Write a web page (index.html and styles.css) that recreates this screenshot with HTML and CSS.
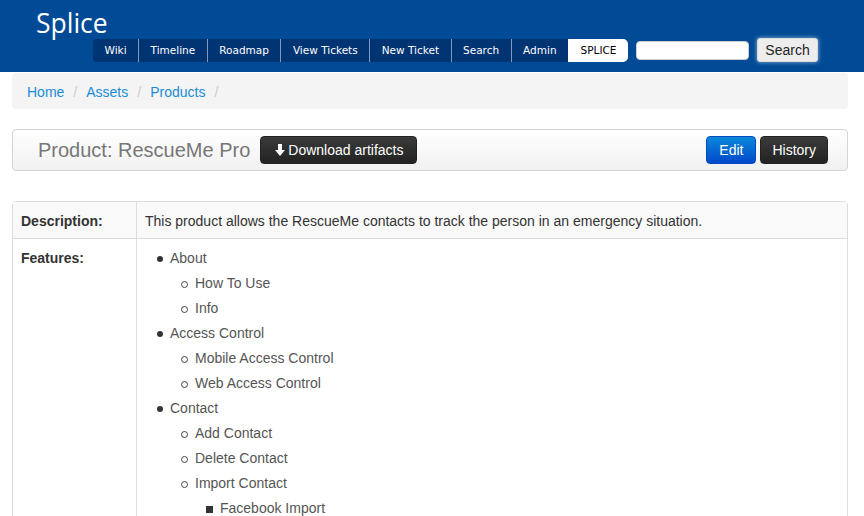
FILE: index.html
```html
<!DOCTYPE html>
<html>
<head>
<meta charset="utf-8">
<link rel="stylesheet" href="styles.css">
</head>
<body>
<header class="top">
  <div class="logo">Splice</div>
  <div class="navrow">
    <ul class="tabs">
      <li>Wiki</li>
      <li>Timeline</li>
      <li>Roadmap</li>
      <li>View Tickets</li>
      <li>New Ticket</li>
      <li>Search</li>
      <li>Admin</li>
      <li class="active">SPLICE</li>
    </ul>
    <input class="search-input" type="text">
    <button class="search-btn">Search</button>
  </div>
</header>
<main class="container">
  <nav class="crumbs">
    <a href="#">Home</a><span class="sep">/</span><a href="#">Assets</a><span class="sep">/</span><a href="#">Products</a><span class="sep">/</span>
  </nav>
  <div class="panel">
    <h1 class="title">Product: RescueMe Pro</h1>
    <button class="btn btn-dark btn-dl"><svg class="arrow" width="10" height="12" viewBox="0 0 10 12"><path d="M3 0h4v6h3l-5 6-5-6h3z" fill="#fff"/></svg>Download artifacts</button>
    <div class="spacer"></div>
    <button class="btn btn-primary">Edit</button>
    <button class="btn btn-dark">History</button>
  </div>
  <table class="info">
    <tr class="odd">
      <th>Description:</th>
      <td>This product allows the RescueMe contacts to track the person in an emergency situation.</td>
    </tr>
    <tr>
      <th>Features:</th>
      <td>
        <ul class="features">
          <li>About
            <ul>
              <li>How To Use</li>
              <li>Info</li>
            </ul>
          </li>
          <li>Access Control
            <ul>
              <li>Mobile Access Control</li>
              <li>Web Access Control</li>
            </ul>
          </li>
          <li>Contact
            <ul>
              <li>Add Contact</li>
              <li>Delete Contact</li>
              <li>Import Contact
                <ul>
                  <li>Facebook Import</li>
                </ul>
              </li>
            </ul>
          </li>
        </ul>
      </td>
    </tr>
  </table>
</main>
</body>
</html>
```
FILE: styles.css
```css
html, body { margin: 0; padding: 0; }
body {
  font-family: "Liberation Sans", Arial, sans-serif;
  font-size: 14px;
  color: #333;
  background: #fff;
  overflow: hidden;
}
.top {
  background: #014b96;
  height: 72px;
  box-sizing: border-box;
  padding-top: 8px;
}
.logo {
  margin-left: 36px;
  font-family: "Open Sans", "Noto Sans", sans-serif;
  font-size: 26.5px;
  line-height: 30px;
  color: #fff;
  letter-spacing: 0;
}
.navrow {
  display: flex;
  align-items: center;
  margin-left: 93px;
  margin-top: -1px;
  height: 26px;
}
.tabs {
  display: flex;
  list-style: none;
  margin: 0;
  padding: 0;
  height: 23px;
}
.tabs li {
  font-family: "DejaVu Sans", Verdana, sans-serif;
  font-size: 10.5px;
  line-height: 23px;
  color: #fff;
  background: #003473;
  padding: 0 11.5px;
  border-left: 1px solid #7f9bc3;
}
.tabs li:first-child { border-left: none; border-radius: 4px 0 0 4px; }
.tabs li.active {
  background: #fff;
  color: #000;
  border-left: 1px solid #fff;
  border-radius: 0 5px 5px 0;
}
.search-input {
  margin-left: 8px;
  width: 113px;
  height: 19px;
  box-sizing: border-box;
  border: 1px solid #ccc;
  border-radius: 4px;
  background: #fff;
  padding: 0;
}
.search-btn {
  margin-left: 8px;
  width: 61px;
  height: 24px;
  box-sizing: border-box;
  font-family: "Liberation Sans", Arial, sans-serif;
  font-size: 14px;
  color: #222;
  background: #ededed;
  border: 1px solid #d8d8d8;
  border-radius: 3px;
  box-shadow: 0 0 4px rgba(255,255,255,0.6);
  padding: 0;
}
.container {
  margin-left: 12px;
  width: 836px;
}
.crumbs {
  margin-top: 1px;
  background: #f4f4f4;
  border-radius: 4px;
  padding: 0 15px;
  height: 36px;
  line-height: 38px;
}
.crumbs a { color: #1a8bd6; text-decoration: none; }
.crumbs .sep { color: #ccc; padding: 0 9px; }
.panel {
  margin-top: 20px;
  height: 42px;
  box-sizing: border-box;
  border: 1px solid #d4d4d4;
  border-radius: 4px;
  background: linear-gradient(#ffffff, #f1f1f1);
  display: flex;
  align-items: center;
  padding: 0 19px 0 25px;
}
.title {
  margin: 0 10px 0 0;
  font-size: 20px;
  font-weight: normal;
  color: #777;
  line-height: 24px;
}
.spacer { flex: 1; }
.btn {
  height: 28px;
  box-sizing: border-box;
  font-family: "Liberation Sans", Arial, sans-serif;
  font-size: 14px;
  color: #fff;
  border-radius: 4px;
  padding: 0 11px;
  display: flex;
  align-items: center;
  margin-left: 4px;
}
.btn-dark {
  background: linear-gradient(#3b3b3b, #222);
  border: 1px solid #222;
}
.btn-dl { margin-left: 0; padding: 0 12px 0 14px; }
.btn-primary {
  background: linear-gradient(#0a88d8, #0049cc);
  border: 1px solid #0049c0;
  padding: 0 12px;
}
.arrow { margin-right: 3px; }
.info {
  margin-top: 30px;
  width: 100%;
  border-collapse: separate;
  border-spacing: 0;
  border: 1px solid #ddd;
  border-radius: 4px;
}
.info th, .info td {
  padding: 9px 8px 7px;
  line-height: 20px;
  text-align: left;
  vertical-align: top;
}
.info th {
  width: 107px;
  font-weight: bold;
  border-right: 1px solid #ddd;
}
.info tr.odd th, .info tr.odd td {
  background: #f9f9f9;
  border-bottom: 1px solid #ddd;
}
.features, .features ul {
  margin: 0;
  padding-left: 25px;
  color: #555;
  line-height: 25px;
  list-style: none;
}
.features { margin-top: -2px; }
.features li { position: relative; }
.features li::before {
  content: "";
  position: absolute;
  left: -13px;
  top: 10px;
  width: 6px;
  height: 6px;
  border-radius: 50%;
  background: #333;
}
.features ul li::before {
  left: -14px;
  width: 5px;
  height: 5px;
  background: transparent;
  border: 1px solid #444;
}
.features ul ul li::before {
  left: -14px;
  width: 7px;
  height: 7px;
  border: none;
  border-radius: 0;
  background: #333;
}
```
